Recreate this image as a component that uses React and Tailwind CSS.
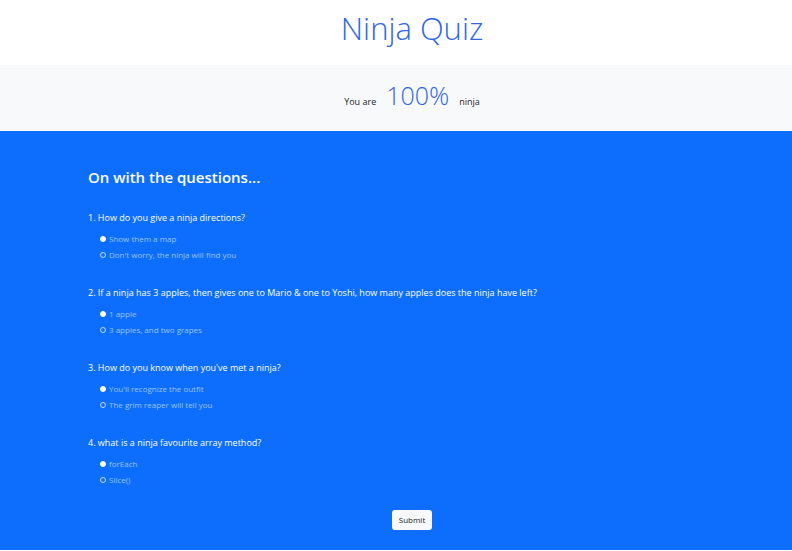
import { useState } from "react";

const questions = [
  { text: "How do you give a ninja directions?", options: ["Show them a map", "Don't worry, the ninja will find you"] },
  {
    text: "If a ninja has 3 apples, then gives one to Mario & one to Yoshi, how many apples does the ninja have left?",
    options: ["1 apple", "3 apples, and two grapes"],
  },
  { text: "How do you know when you've met a ninja?", options: ["You'll recognize the outfit", "The grim reaper will tell you"] },
  { text: "what is a ninja favourite array method?", options: ["forEach", "Slice()"] },
];

function Question({ number, text, options }) {
  const [selected, setSelected] = useState(0);
  return (
    <fieldset className="mb-[22px]">
      <legend className="mb-[5px] text-[9px] leading-4">
        {number}. {text}
      </legend>
      {options.map((option, i) => (
        <label key={option} className="ml-3 flex h-4 items-center gap-[3px] text-[8px] leading-4 text-[#9ac3ff]">
          <input
            type="radio"
            name={`q${number}`}
            checked={selected === i}
            onChange={() => setSelected(i)}
            className="size-1.5 shrink-0 appearance-none rounded-full border border-[#c2dbff] checked:border-white checked:bg-white"
          />
          {option}
        </label>
      ))}
    </fieldset>
  );
}

export default function App() {
  return (
    <div className="bg-white font-['Open_Sans','Noto_Sans',sans-serif] text-white">
      <header className="pt-2 pb-[17px] pl-8 text-center">
        <h1 className="text-[31px] leading-10 font-light text-[#2f66e3]">Ninja Quiz</h1>
      </header>
      <section className="bg-[#f8f9fa] pt-3 pb-4 pl-8">
        <p className="flex h-[38px] items-baseline justify-center gap-2.5 text-[9px] leading-9 text-[#212529]">
          <span>You are</span>
          <span className="text-[25px] font-light text-[#2f66e3]">100%</span>
          <span>ninja</span>
        </p>
      </section>
      <main className="bg-[#0d6efd] pt-[34px] pr-14 pb-5 pl-[88px]">
        <h2 className="mb-[21px] text-[15px] leading-6 font-semibold">On with the questions...</h2>
        <form onSubmit={(e) => e.preventDefault()}>
          {questions.map((q, i) => (
            <Question key={q.text} number={i + 1} text={q.text} options={q.options} />
          ))}
          <div className="flex justify-center">
            <button type="submit" className="h-5 rounded-[3px] bg-[#f8f9fa] px-[7px] text-[8px] leading-5 text-[#212529]">
              Submit
            </button>
          </div>
        </form>
      </main>
    </div>
  );
}
